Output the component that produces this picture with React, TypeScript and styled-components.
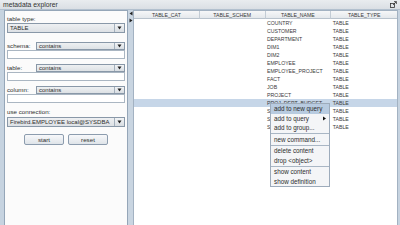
import { FC } from 'react';
import styled, { createGlobalStyle } from 'styled-components';

const GlobalStyle = createGlobalStyle`
  html, body {
    margin: 0;
    padding: 0;
    background: #c6d3e0;
  }
  * {
    box-sizing: border-box;
  }
`;

const Window = styled.div`
  width: 400px;
  height: 225px;
  display: flex;
  flex-direction: column;
  background: #c6d3e0;
  font-family: "Liberation Sans", Arial, sans-serif;
  color: #2e2e2e;
  overflow: hidden;
`;

const TitleBar = styled.div`
  height: 10px;
  display: flex;
  align-items: center;
  justify-content: space-between;
  padding: 0 3px 0 3px;
  background: linear-gradient(#e9ecef, #dadfe4);
  border-bottom: 1px solid #b2c0ce;
  font-size: 6.8px;
  color: #333;
`;

const Body = styled.div`
  flex: 1;
  display: flex;
  padding: 0 2px 0 4px;
  min-height: 0;
`;

const LeftPanel = styled.div`
  width: 124px;
  background: #fbfbfb;
  border: 1px solid #95a6b8;
  border-bottom: none;
  display: flex;
  flex-direction: column;
  padding: 4px 2px 0 2px;
`;

const Label = styled.div<{ $w?: number }>`
  font-size: 6.2px;
  line-height: 8px;
  height: 8px;
  width: ${p => (p.$w ? `${p.$w}px` : 'auto')};
  flex: none;
  white-space: nowrap;
`;

const Combo = styled.div<{ $h: number }>`
  flex: 1;
  height: ${p => p.$h}px;
  display: flex;
  border: 1px solid #8998a8;
  background: linear-gradient(#eef0f2, #dde1e5);
  font-size: 6px;
  line-height: ${p => p.$h - 2}px;
`;

const ComboText = styled.div`
  flex: 1;
  padding-left: 2px;
  white-space: nowrap;
  overflow: hidden;
`;

const ComboArrow = styled.div`
  width: 10px;
  border-left: 1px solid #a4b0bc;
  display: flex;
  align-items: center;
  justify-content: center;
  background: linear-gradient(#f2f4f6, #d8dde2);
`;

const FilterRow = styled.div`
  display: flex;
  align-items: center;
`;

const FilterGroup = styled.div<{ $mt: number }>`
  display: flex;
  flex-direction: column;
  margin-top: ${p => p.$mt}px;
`;

const Field = styled.div`
  height: 9px;
  background: #fff;
  border: 1px solid #aab6c2;
`;

const ButtonRow = styled.div`
  display: flex;
  justify-content: center;
  gap: 4px;
  margin-top: 7px;
`;

const Button = styled.div`
  width: 40px;
  height: 11px;
  border: 1px solid #8c9cae;
  border-radius: 2px;
  background: linear-gradient(#f7f8fa, #dfe4e9);
  font-size: 6.2px;
  line-height: 9px;
  text-align: center;
`;

const Splitter = styled.div`
  width: 5px;
  background-color: #c9d5e1;
  background-image: radial-gradient(#a7b6c6 0.6px, transparent 0.7px);
  background-size: 2px 2px;
  display: flex;
  flex-direction: column;
  align-items: center;
  gap: 2px;
  padding-top: 1px;
`;

const RightPanel = styled.div`
  flex: 1;
  position: relative;
  background: #fff;
  border: 1px solid #a3b2c2;
  border-bottom: none;
  font-size: 5.2px;
`;

const Grid = styled.div`
  display: grid;
  grid-template-columns: repeat(4, 1fr);
`;

const HeaderCell = styled.div`
  height: 8px;
  line-height: 8px;
  text-align: center;
  color: #3a3a3a;
  background: linear-gradient(#f6f7f8, #e4e8ec);
  border-bottom: 1px solid #b9c3cd;
  border-right: 1px solid #c3ccd5;
  white-space: nowrap;
  overflow: hidden;

  &:last-child {
    border-right: none;
  }
`;

const Row = styled(Grid)<{ $sel?: boolean }>`
  height: 8px;
  line-height: 8px;
  background: ${p => (p.$sel ? '#c6d6e8' : 'transparent')};
`;

const Cell = styled.div`
  padding-left: 1.5px;
  white-space: nowrap;
  overflow: hidden;
  color: #3b3b3b;
`;

const Menu = styled.div`
  position: absolute;
  left: 136px;
  top: 92px;
  width: 60px;
  background: #f4f5f7;
  border: 1px solid #9dabbb;
  font-size: 6.3px;
  color: #2c2c2c;
  padding: 0;
`;

const MenuItem = styled.div<{ $active?: boolean }>`
  height: 9.5px;
  line-height: 9.5px;
  padding-left: 3px;
  padding-right: 3px;
  display: flex;
  justify-content: space-between;
  align-items: center;
  white-space: nowrap;
  background: ${p => (p.$active ? '#b8cbe0' : 'transparent')};
`;

const MenuSep = styled.div`
  height: 1px;
  margin: 0.5px 0;
  background: #a9b6c4;
`;

const Caret: FC = () => (
  <svg width="5" height="4" viewBox="0 0 5 4">
    <path d="M0.5 0.5 H4.5 L2.5 3.5 Z" fill="#222" />
  </svg>
);

const MaxIcon: FC = () => (
  <svg width="7" height="7" viewBox="0 0 7 7">
    <rect x="0.5" y="2.5" width="4" height="4" fill="none" stroke="#333" strokeWidth="0.8" />
    <path d="M3 4 L6.3 0.7 M4 0.6 H6.4 V3" fill="none" stroke="#333" strokeWidth="0.8" />
  </svg>
);

const SplitArrow: FC<{ dir: 'left' | 'right' }> = ({ dir }) => (
  <svg width="4" height="5" viewBox="0 0 4 5">
    {dir === 'left'
      ? <path d="M3.5 0.5 V4.5 L0.5 2.5 Z" fill="#222" />
      : <path d="M0.5 0.5 V4.5 L3.5 2.5 Z" fill="#222" />}
  </svg>
);

const SubArrow: FC = () => (
  <svg width="3" height="5" viewBox="0 0 3 5">
    <path d="M0 0.5 V4.5 L3 2.5 Z" fill="#111" />
  </svg>
);

const tables = [
  'COUNTRY',
  'CUSTOMER',
  'DEPARTMENT',
  'DIM1',
  'DIM2',
  'EMPLOYEE',
  'EMPLOYEE_PROJECT',
  'FACT',
  'JOB',
  'PROJECT',
  'PROJ_DEPT_BUDGET',
  'SALARY_HISTORY',
  'SALES',
  'SHIPMENTS',
];

const filters = [
  { label: 'schema:', mt: 9 },
  { label: 'table:', mt: 5 },
  { label: 'column:', mt: 5 },
];

const App: FC = () => {
  return (
    <>
      <GlobalStyle />
      <Window>
        <TitleBar>
          <span>metadata explorer</span>
          <MaxIcon />
        </TitleBar>
        <Body>
          <LeftPanel>
            <Label>table type:</Label>
            <FilterRow>
              <Combo $h={10}>
                <ComboText>TABLE</ComboText>
                <ComboArrow><Caret /></ComboArrow>
              </Combo>
            </FilterRow>

            {filters.map(f => (
              <FilterGroup key={f.label} $mt={f.mt}>
                <FilterRow>
                  <Label $w={29}>{f.label}</Label>
                  <Combo $h={8}>
                    <ComboText>contains</ComboText>
                    <ComboArrow><Caret /></ComboArrow>
                  </Combo>
                </FilterRow>
                <Field />
              </FilterGroup>
            ))}

            <FilterGroup $mt={5}>
              <Label>use connection:</Label>
              <FilterRow style={{ marginTop: 1 }}>
                <Combo $h={10}>
                  <ComboText>Firebird.EMPLOYEE local@SYSDBA</ComboText>
                  <ComboArrow><Caret /></ComboArrow>
                </Combo>
              </FilterRow>
            </FilterGroup>

            <ButtonRow>
              <Button>start</Button>
              <Button>reset</Button>
            </ButtonRow>
          </LeftPanel>

          <Splitter>
            <SplitArrow dir="left" />
            <SplitArrow dir="right" />
          </Splitter>

          <RightPanel>
            <Grid>
              <HeaderCell>TABLE_CAT</HeaderCell>
              <HeaderCell>TABLE_SCHEM</HeaderCell>
              <HeaderCell>TABLE_NAME</HeaderCell>
              <HeaderCell>TABLE_TYPE</HeaderCell>
            </Grid>
            {tables.map((t, i) => (
              <Row key={t} $sel={i === 10}>
                <Cell />
                <Cell />
                <Cell>{t}</Cell>
                <Cell>TABLE</Cell>
              </Row>
            ))}

            <Menu>
              <MenuItem $active>add to new query</MenuItem>
              <MenuItem>add to query<SubArrow /></MenuItem>
              <MenuItem>add to group...</MenuItem>
              <MenuSep />
              <MenuItem>new command...</MenuItem>
              <MenuSep />
              <MenuItem>delete content</MenuItem>
              <MenuItem>drop &lt;object&gt;</MenuItem>
              <MenuSep />
              <MenuItem>show content</MenuItem>
              <MenuItem>show definition</MenuItem>
            </Menu>
          </RightPanel>
        </Body>
      </Window>
    </>
  );
};

export default App;
